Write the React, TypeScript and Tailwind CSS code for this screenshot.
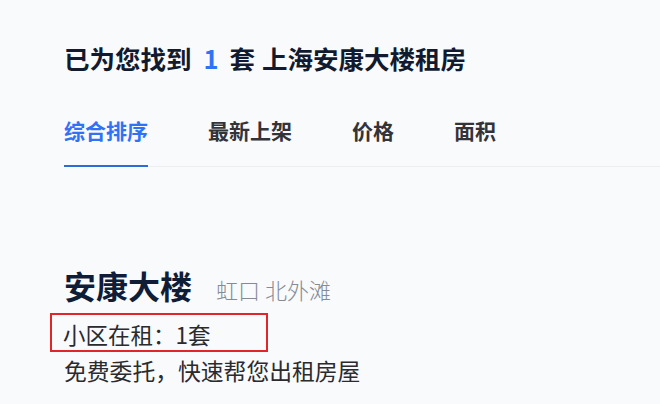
const tabs = ["综合排序", "最新上架", "价格", "面积"];

export default function App() {
  const active = 0;

  return (
    <div
      className="min-h-[404px] w-full overflow-hidden bg-[#f9fafc] pl-[64px]"
      style={{ fontFamily: '"Noto Sans CJK SC", "Noto Sans", sans-serif' }}
    >
      {/* Header */}
      <h1 className="pt-[40px] text-[25.5px] font-bold leading-[36px] text-[#111a2e]">
        已为您找到
        <span className="ml-[12px] mr-[11px] text-[#3072f6]">1</span>
        套<span className="ml-[7px]">上海安康大楼租房</span>
      </h1>

      {/* Tabs */}
      <div className="mt-[40px] flex gap-[60px] border-b border-[#eceef2]">
        {tabs.map((tab, i) => (
          <button
            key={tab}
            className={`-mb-px pb-[21px] text-[21px] font-bold leading-[28px] ${
              i === active
                ? "border-b-2 border-[#2d6bdc] text-[#3072f6]"
                : "border-b-2 border-transparent text-[#333338]"
            }`}
          >
            {tab}
          </button>
        ))}
      </div>

      {/* Community */}
      <div className="mt-[98px] flex items-baseline">
        <h2 className="text-[32px] font-bold leading-[40px] text-[#101d37]">安康大楼</h2>
        <span className="ml-[24px] text-[22px] font-light leading-[28px] text-[#858b96]">
          虹口 北外滩
        </span>
      </div>

      <div className="mt-[8px] -ml-[14px] flex h-[39px] w-[218px] items-center border-2 border-[#e0262b] pl-[11px] pt-[2px]">
        <span className="text-[22.5px] leading-[30px] text-[#2b2b2e]">小区在租：1套</span>
      </div>

      <p className="mt-[4px] text-[22.8px] leading-[30px] text-[#2b2b2e]">
        免费委托，快速帮您出租房屋
      </p>
    </div>
  );
}
